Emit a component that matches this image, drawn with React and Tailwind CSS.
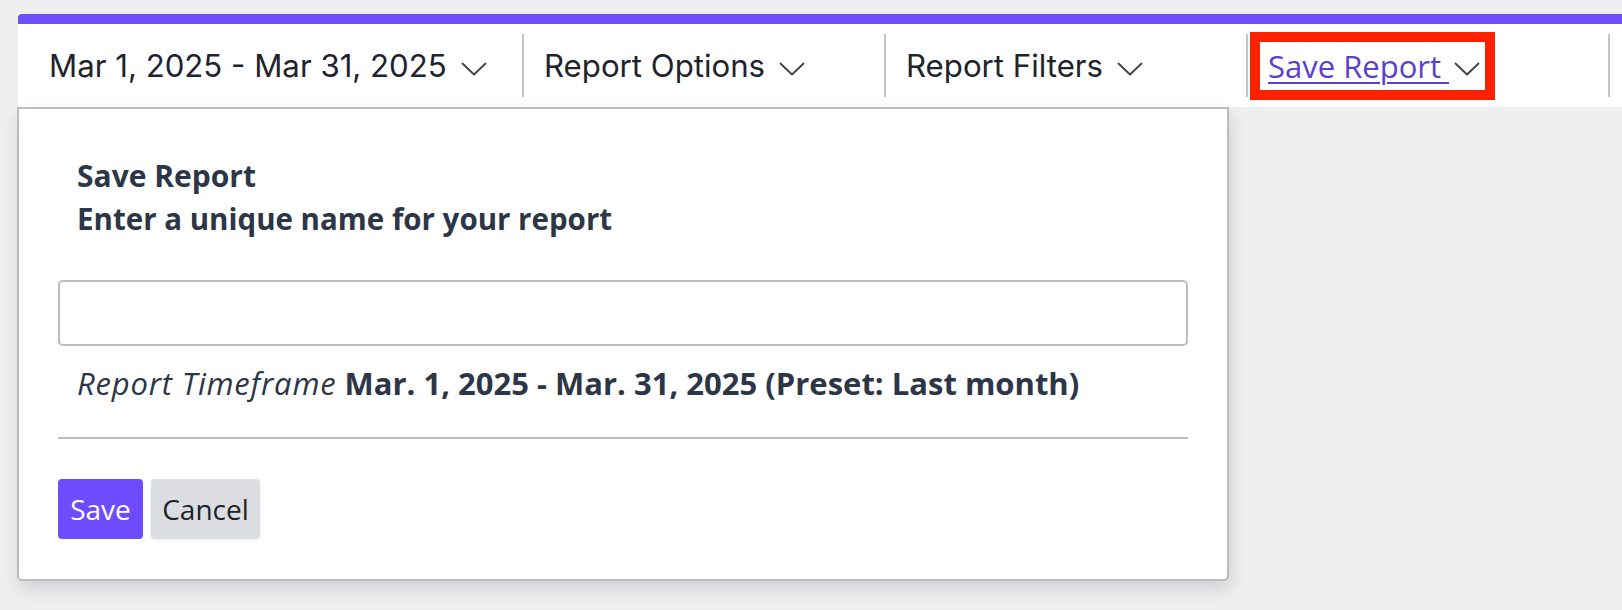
import React from "react";

const Chevron = ({ className = "" }) => (
  <svg
    width="26"
    height="14"
    viewBox="0 0 26 14"
    fill="none"
    className={"shrink-0 " + className}
  >
    <path
      d="M1.5 1.5 L13 12.5 L24.5 1.5"
      stroke="#3b4049"
      strokeWidth="1.8"
      strokeLinecap="round"
      strokeLinejoin="round"
    />
  </svg>
);

const Separator = () => <div className="h-[63px] w-[2px] shrink-0 bg-[#c2c2c2]" />;

const MenuItem = ({ label, className = "" }) => (
  <div className={"flex shrink-0 items-center gap-[14px] " + className}>
    <span className="whitespace-nowrap">{label}</span>
    <Chevron className="mt-[6px]" />
  </div>
);

export default function App() {
  return (
    <div
      className="min-h-screen overflow-hidden bg-[#eeeff1] pt-[14px]"
      style={{ fontFamily: "Inter, 'Liberation Sans', sans-serif" }}
    >
      {/* report toolbar */}
      <div className="ml-[18px]">
        <div className="h-[10px] rounded-tl-[4px] bg-[#6e4ffc]" />
        <div className="flex h-[83px] items-center bg-white text-[31.2px] leading-[40px] text-[#1e232c]">
          <MenuItem label="Mar 1, 2025 - Mar 31, 2025" className="w-[504px] pl-[31px]" />
          <Separator />
          <MenuItem label="Report Options" className="w-[360px] pl-[20px]" />
          <Separator />
          <MenuItem label="Report Filters" className="w-[360px] pl-[20px]" />
          <Separator />
          <div className="flex w-[360px] shrink-0 items-center pl-[20px]">
            <div className="relative flex h-[40px] items-center">
              <span
                className="whitespace-nowrap text-[#5a3fd0] underline decoration-2 underline-offset-[4px]"
                style={{ fontFamily: "'Open Sans', sans-serif", fontSize: "31px" }}
              >
                Save Report{"\u00a0"}
              </span>
              <Chevron className="ml-[5px] mt-[6px]" />
              <span className="pointer-events-none absolute -bottom-[14px] -left-[18px] -right-[15px] -top-[14px] border-[10px] border-[#fe2100]" />
            </div>
          </div>
          <Separator />
        </div>
      </div>

      {/* save report dropdown */}
      <div
        className="ml-[17px] w-[1212px] rounded-b-[5px] border-2 border-[#bcbcbc] bg-white px-[39px] pb-[40px] pt-[45px] text-[#2d3646] shadow-[2px_8px_18px_rgba(0,0,0,0.13)]"
        style={{ fontFamily: "'Open Sans', 'Noto Sans', sans-serif" }}
      >
        <div className="pl-[19px] text-[29.5px] font-bold leading-[43px]">
          <div className="text-[30px]">Save Report</div>
          <div>Enter a unique name for your report</div>
        </div>

        <input
          type="text"
          className="mt-[40px] block h-[66px] w-full rounded-[5px] border-2 border-[#bdbdbd] bg-white px-[16px] text-[28px] outline-none"
        />

        <p className="mt-[16px] whitespace-nowrap pl-[19px] text-[31px] leading-[43px]">
          <span className="italic tracking-[0.8px]">Report Timeframe</span>{" "}
          <span className="font-bold">Mar. 1, 2025 - Mar. 31, 2025 (Preset: Last month)</span>
        </p>

        <div className="mt-[32px] h-[2px] bg-[#bdbdbd]" />

        <div className="mt-[40px] flex gap-[8px] text-[28px]">
          <button className="h-[60px] w-[85px] rounded-[4px] bg-[#6d4cfe] text-white">Save</button>
          <button className="h-[60px] w-[109px] rounded-[4px] bg-[#dcdde1] text-[#1d222b] shadow-[0_1px_3px_rgba(0,0,0,0.08)]">
            Cancel
          </button>
        </div>
      </div>
    </div>
  );
}
